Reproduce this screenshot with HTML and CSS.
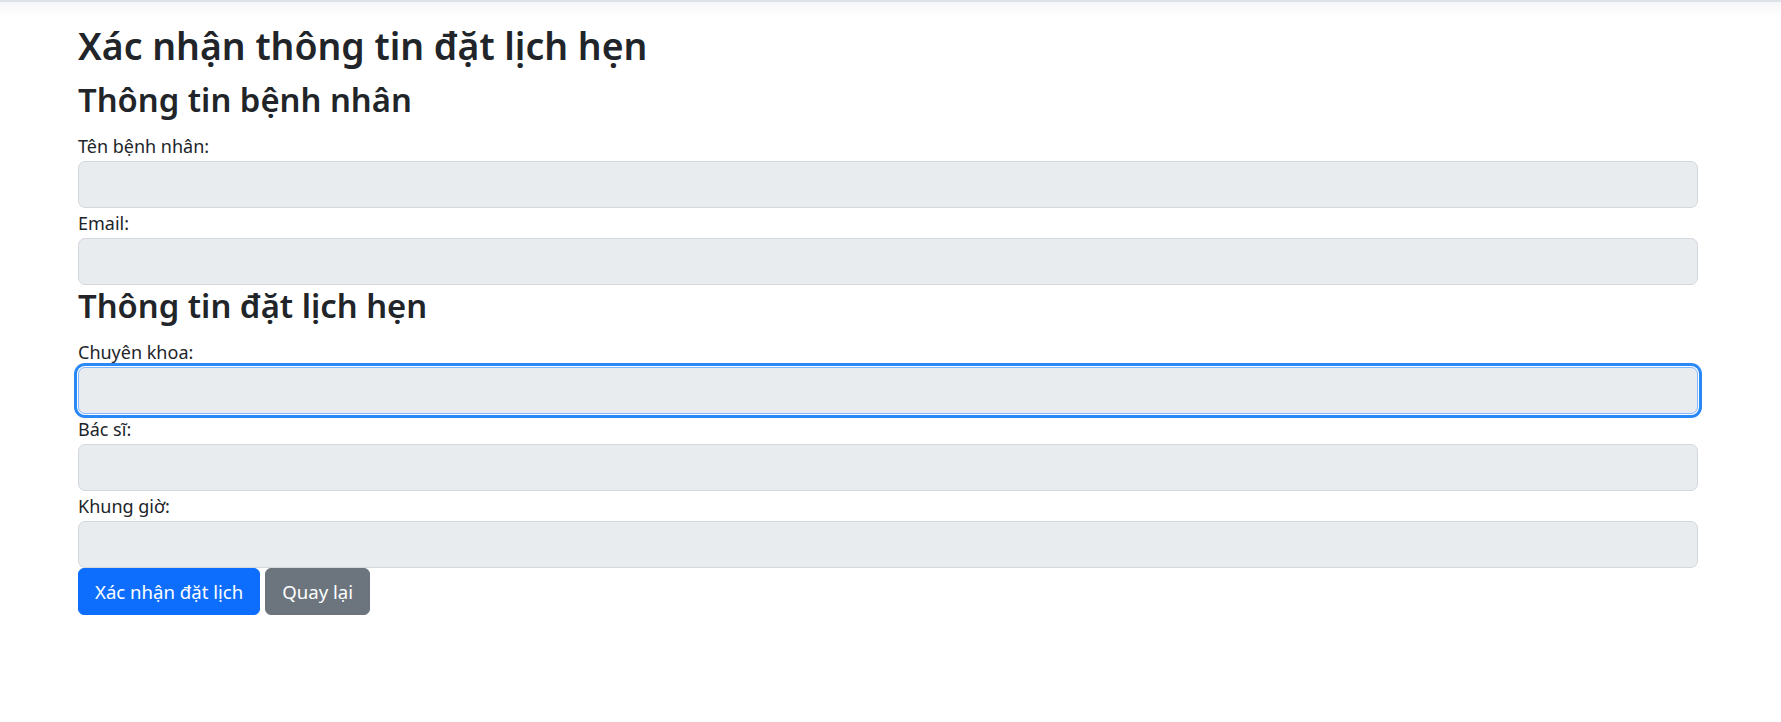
FILE: index.html
```html
<!DOCTYPE html>
<html lang="vi">
<head>
<meta charset="utf-8">
<title>Xác nhận thông tin đặt lịch hẹn</title>
<link rel="stylesheet" href="styles.css">
</head>
<body>
<div class="top-shade"></div>
<main class="page">
  <h1 class="title">Xác nhận thông tin đặt lịch hẹn</h1>
  <h2 class="section">Thông tin bệnh nhân</h2>
  <div class="field">
    <label class="label" for="name">Tên bệnh nhân:</label>
    <input class="input" id="name" type="text" readonly>
  </div>
  <div class="field">
    <label class="label" for="email">Email:</label>
    <input class="input" id="email" type="email" readonly>
  </div>
  <h2 class="section section-second">Thông tin đặt lịch hẹn</h2>
  <div class="field">
    <label class="label" for="spec">Chuyên khoa:</label>
    <input class="input input-focus" id="spec" type="text" readonly>
  </div>
  <div class="field">
    <label class="label" for="doc">Bác sĩ:</label>
    <input class="input" id="doc" type="text" readonly>
  </div>
  <div class="field">
    <label class="label" for="slot">Khung giờ:</label>
    <input class="input" id="slot" type="text" readonly>
  </div>
  <div class="actions">
    <button class="btn btn-primary" type="button">Xác nhận đặt lịch</button>
    <button class="btn btn-secondary" type="button">Quay lại</button>
  </div>
</main>
</body>
</html>
```
FILE: styles.css
```css
* { box-sizing: border-box; }

html, body {
  margin: 0;
  padding: 0;
  background: #ffffff;
}

body {
  font-family: "Segoe UI", "Noto Sans", "Open Sans", sans-serif;
  color: #212529;
  position: relative;
}

.top-shade {
  position: absolute;
  top: 0;
  left: 0;
  right: 0;
  height: 16px;
  border-top: 2px solid #dde1e8;
  background: linear-gradient(#f6f6f8, #ffffff);
  pointer-events: none;
}

.page {
  padding: 22px 83px 0 78px;
}

.title {
  margin: 0 0 11px;
  font-size: 37.4px;
  line-height: 48px;
  font-weight: 600;
}

.section {
  margin: 0 0 12px;
  font-size: 32.8px;
  line-height: 38px;
  font-weight: 600;
}

.section-second {
  margin-top: 2px;
}

.field {
  display: flex;
  flex-direction: column;
}

.label {
  font-size: 18px;
  line-height: 30px;
  height: 30px;
}

.input {
  display: block;
  width: 100%;
  height: 47px;
  margin: 0;
  padding: 8px 16px;
  font: inherit;
  font-size: 20px;
  background: #e9ecef;
  border: 1px solid #d4d8dd;
  border-radius: 7px;
  outline: none;
}

.input-focus {
  border-color: #86b7fe;
  box-shadow: 0 0 0 1px #ffffff, 0 0 0 4px #2a88f5;
}

.actions {
  display: flex;
  gap: 5px;
}

.btn {
  height: 47px;
  padding: 0 16px;
  font: inherit;
  font-size: 18.6px;
  line-height: 45px;
  color: #ffffff;
  border: 1px solid transparent;
  border-radius: 6px;
  cursor: pointer;
}

.btn-primary {
  background: #0d6efd;
  border-color: #0d6efd;
}

.btn-secondary {
  background: #6c757d;
  border-color: #6c757d;
}
```
